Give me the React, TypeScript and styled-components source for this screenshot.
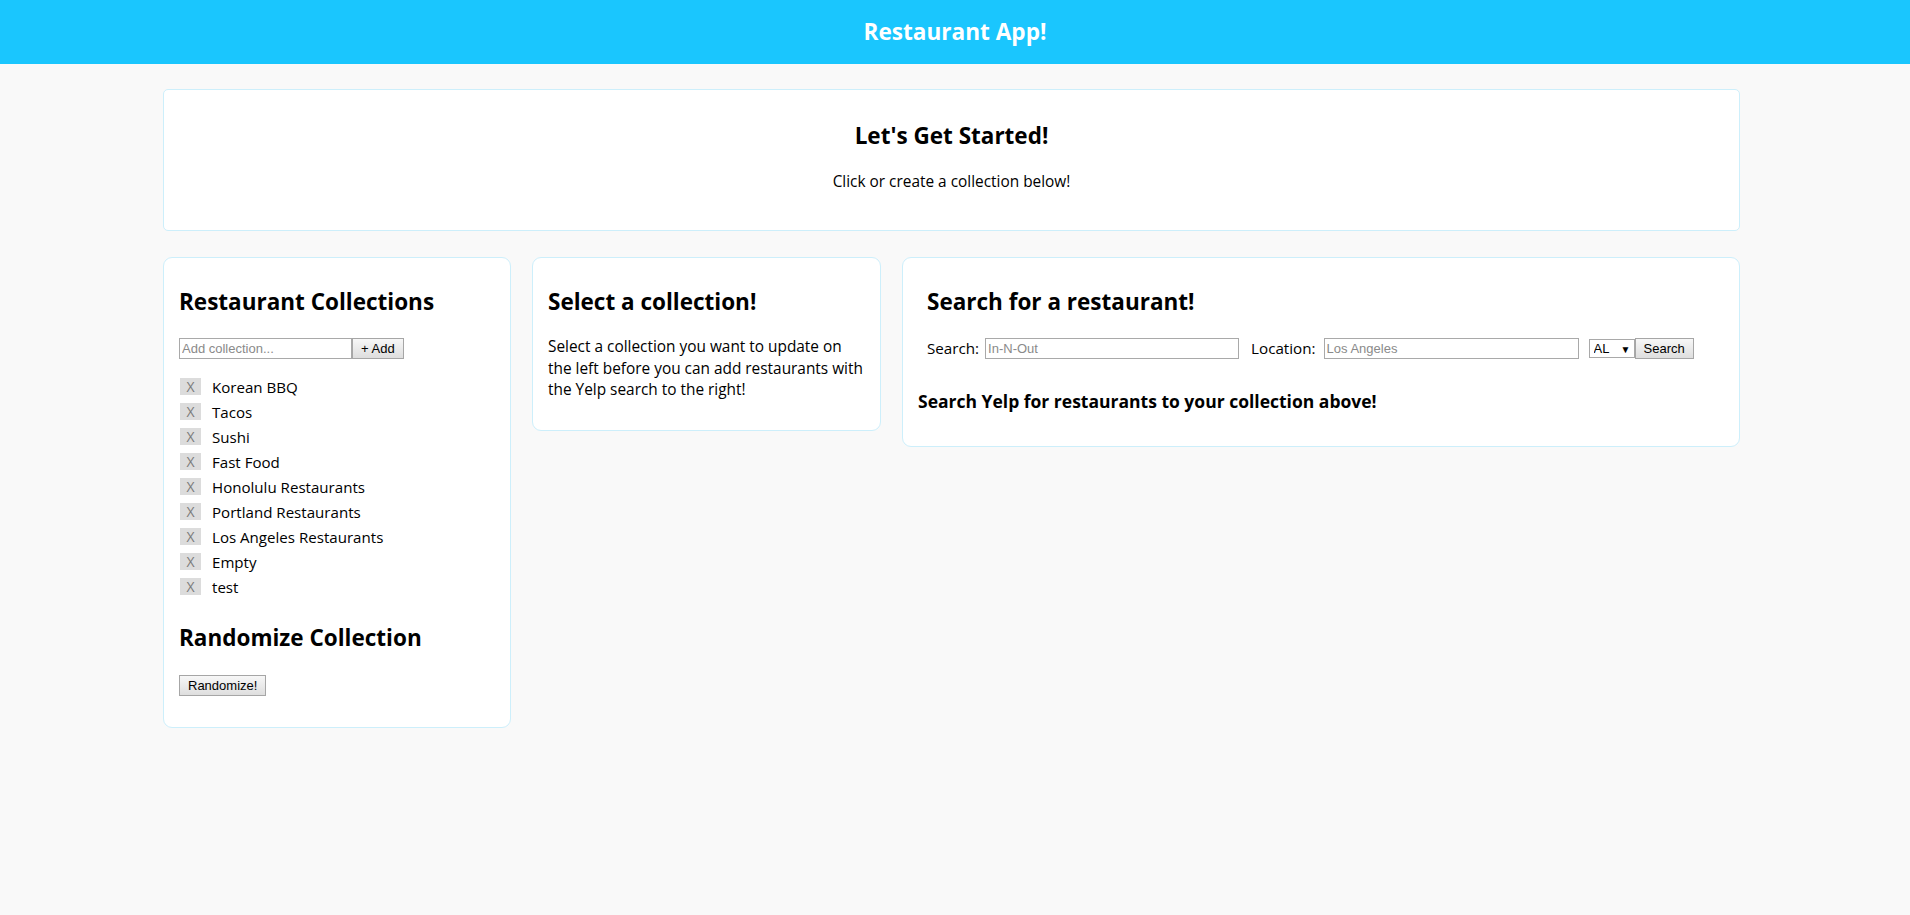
import React from "react";
import styled, { createGlobalStyle } from "styled-components";

const GlobalStyle = createGlobalStyle`
  html, body {
    margin: 0;
    padding: 0;
    background: #f9f9f9;
    font-family: "Open Sans", "Noto Sans", sans-serif;
    color: #000;
  }
  * { box-sizing: border-box; }
`;

const Header = styled.header`
  height: 64px;
  background: #1ac6fe;
  display: flex;
  align-items: center;
  justify-content: center;
`;

const AppTitle = styled.h1`
  margin: 0;
  color: #fff;
  font-size: 22.6px;
  font-weight: 700;
  line-height: 30px;
`;

const Main = styled.main`
  padding: 25px 170px 40px 163px;
`;

const TopCard = styled.section`
  background: #fff;
  border: 1px solid #cdeffb;
  border-radius: 5px;
  padding: 30px 15px 38px;
  text-align: center;
`;

const Row = styled.div`
  display: grid;
  grid-template-columns: 348px 349px 1fr;
  gap: 21px;
  margin-top: 26px;
  align-items: start;
`;

const Card = styled.section<{ $pb: number }>`
  background: #fff;
  border: 1px solid #cdeffb;
  border-radius: 9px;
  padding: 28px 15px ${(p) => p.$pb}px;
`;

const Heading = styled.h2<{ $indent?: number }>`
  margin: 0;
  font-size: 22.5px;
  line-height: 32px;
  font-weight: 700;
  padding-left: ${(p) => p.$indent ?? 0}px;
`;

const Text = styled.p`
  margin: 0;
  font-size: 15.4px;
  line-height: 21.3px;
`;

const TopText = styled(Text)`
  margin-top: 19px;
`;

const MidText = styled(Text)`
  margin-top: 18px;
`;

const Form = styled.div<{ $indent?: number }>`
  display: flex;
  align-items: center;
  margin-top: 20px;
  padding-left: ${(p) => p.$indent ?? 0}px;
`;

const Input = styled.input<{ $w: number }>`
  width: ${(p) => p.$w}px;
  height: 21px;
  margin: 0;
  padding: 1px 2px;
  border: 1px solid #a9a9a9;
  background: #fff;
  font-family: "Liberation Sans", Arial, sans-serif;
  font-size: 13px;
  color: #000;
  outline: none;
  &::placeholder { color: #8a8a8a; }
`;

const Button = styled.button`
  height: 21px;
  margin: 0;
  padding: 0 8px;
  border: 1px solid #a6a6a6;
  border-radius: 0;
  background: linear-gradient(#f7f7f7, #dedede);
  font-family: "Liberation Sans", Arial, sans-serif;
  font-size: 13px;
  color: #000;
  line-height: 19px;
  cursor: pointer;
`;

const List = styled.ul`
  list-style: none;
  margin: 15px 0 0;
  padding: 0;
`;

const Item = styled.li`
  height: 25px;
  display: flex;
  align-items: center;
  font-size: 15.1px;
`;

const RemoveBox = styled.span`
  width: 21px;
  height: 17px;
  margin-left: 1px;
  margin-right: 11px;
  background: #dcdcdc;
  color: #7a7a7a;
  font-size: 14px;
  line-height: 17px;
  text-align: center;
`;

const SecondHeading = styled(Heading)`
  margin-top: 23px;
`;

const ButtonRow = styled.div`
  margin-top: 19px;
`;

const Label = styled.label<{ $ml?: number; $mr?: number }>`
  font-size: 15.2px;
  line-height: 20px;
  margin-top: -2px;
  margin-left: ${(p) => p.$ml ?? 0}px;
  margin-right: ${(p) => p.$mr ?? 0}px;
`;

const SelectBox = styled.span`
  display: inline-flex;
  align-items: center;
  height: 19px;
  width: 46px;
  margin-left: 10px;
  border: 1px solid #a9a9a9;
  background: #fff;
`;

const Select = styled.select`
  appearance: none;
  -webkit-appearance: none;
  border: 0;
  background: transparent;
  padding: 0 0 0 4px;
  width: 30px;
  font-family: "Liberation Sans", Arial, sans-serif;
  font-size: 13px;
  color: #000;
  outline: none;
`;

const Arrow = styled.span`
  font-size: 10px;
  color: #000;
  line-height: 1;
  margin-left: 1px;
`;

const SubHeading = styled.h3`
  margin: 30px 0 0;
  font-size: 17.5px;
  line-height: 24px;
  font-weight: 700;
`;

const collections = [
  "Korean BBQ",
  "Tacos",
  "Sushi",
  "Fast Food",
  "Honolulu Restaurants",
  "Portland Restaurants",
  "Los Angeles Restaurants",
  "Empty",
  "test",
];

export default function App() {
  return (
    <>
      <GlobalStyle />
      <Header>
        <AppTitle>Restaurant App!</AppTitle>
      </Header>
      <Main>
        <TopCard>
          <Heading>Let's Get Started!</Heading>
          <TopText>Click or create a collection below!</TopText>
        </TopCard>
        <Row>
          <Card $pb={31}>
            <Heading>Restaurant Collections</Heading>
            <Form>
              <Input $w={173} placeholder="Add collection..." />
              <Button>+ Add</Button>
            </Form>
            <List>
              {collections.map((c) => (
                <Item key={c}>
                  <RemoveBox>X</RemoveBox>
                  {c}
                </Item>
              ))}
            </List>
            <SecondHeading>Randomize Collection</SecondHeading>
            <ButtonRow>
              <Button>Randomize!</Button>
            </ButtonRow>
          </Card>
          <Card $pb={30}>
            <Heading>Select a collection!</Heading>
            <MidText>
              Select a collection you want to update on the left before you can add
              restaurants with the Yelp search to the right!
            </MidText>
          </Card>
          <Card $pb={33}>
            <Heading $indent={9}>Search for a restaurant!</Heading>
            <Form $indent={9}>
              <Label $mr={6}>Search:</Label>
              <Input $w={254} placeholder="In-N-Out" />
              <Label $ml={12} $mr={8}>Location:</Label>
              <Input $w={255} placeholder="Los Angeles" />
              <SelectBox>
                <Select defaultValue="AL">
                  <option value="AL">AL</option>
                  <option value="CA">CA</option>
                  <option value="HI">HI</option>
                  <option value="OR">OR</option>
                </Select>
                <Arrow>▼</Arrow>
              </SelectBox>
              <Button>Search</Button>
            </Form>
            <SubHeading>Search Yelp for restaurants to your collection above!</SubHeading>
          </Card>
        </Row>
      </Main>
    </>
  );
}
